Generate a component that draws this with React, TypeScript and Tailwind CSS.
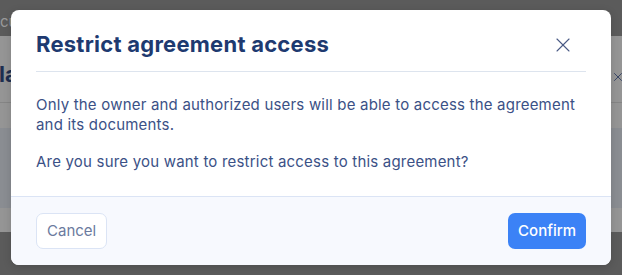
import { X } from 'lucide-react';

export default function App() {
  return (
    <div className="relative w-[622px] h-[275px] overflow-hidden bg-[#5b5b5b] font-['Inter',sans-serif]">
      {/* page behind the overlay */}
      <div className="flex flex-col h-full">
        <div className="h-[36px] pt-[12px] text-[15px] text-[#9a9a9a] leading-[20px]">cu</div>
        <div className="h-[196px] bg-[#959595] flex flex-col">
          <div className="h-[67px] pt-[10px] border-b border-[#858585] flex items-center justify-between">
            <span className="text-[22px] font-bold text-[#1d2d50] -ml-[1px]">la</span>
            <X size={14} strokeWidth={1.5} className="text-[#2e3d60] -mr-[3px] mt-[6px]" />
          </div>
          <div className="h-[25px]" />
          <div className="h-[80px] bg-[#8a8d92]" />
        </div>
      </div>

      {/* modal */}
      <div className="absolute left-[11px] top-[10px] w-[600px] h-[255px] bg-white rounded-[8px] overflow-hidden flex flex-col shadow-[0_2px_8px_rgba(0,0,0,0.15)]">
        <div className="px-[25px] pt-[20px]">
          <div className="flex items-center justify-between pb-[13px] border-b border-[#dde4ee]">
            <h2 className="text-[22px] leading-[28px] font-bold text-[#1e3a70] tracking-[0.25px]">Restrict agreement access</h2>
            <button className="w-[24px] h-[24px] flex items-center justify-center mr-[11px] mt-[2px] text-[#4a5a85]">
              <X size={24} strokeWidth={1.1} />
            </button>
          </div>
        </div>
        <div className="px-[25px] pt-[23px] pb-[24px] text-[15px] leading-[20px] tracking-[0.2px] text-[#3b5186] flex flex-col gap-[17px] flex-1">
          <p>Only the owner and authorized users will be able to access the agreement and its documents.</p>
          <p>Are you sure you want to restrict access to this agreement?</p>
        </div>
        <div className="bg-[#f7f9fe] border-t border-[#dbe4f5] px-[25px] py-[16px] flex items-center justify-between">
          <button className="h-[36px] px-[10px] rounded-[7px] border border-[#dbe4f5] bg-white text-[15px] text-[#6b7a9e]">Cancel</button>
          <button className="h-[36px] px-[10px] rounded-[7px] bg-[#3b82f6] text-[15px] font-medium text-white">Confirm</button>
        </div>
      </div>
    </div>
  );
}
